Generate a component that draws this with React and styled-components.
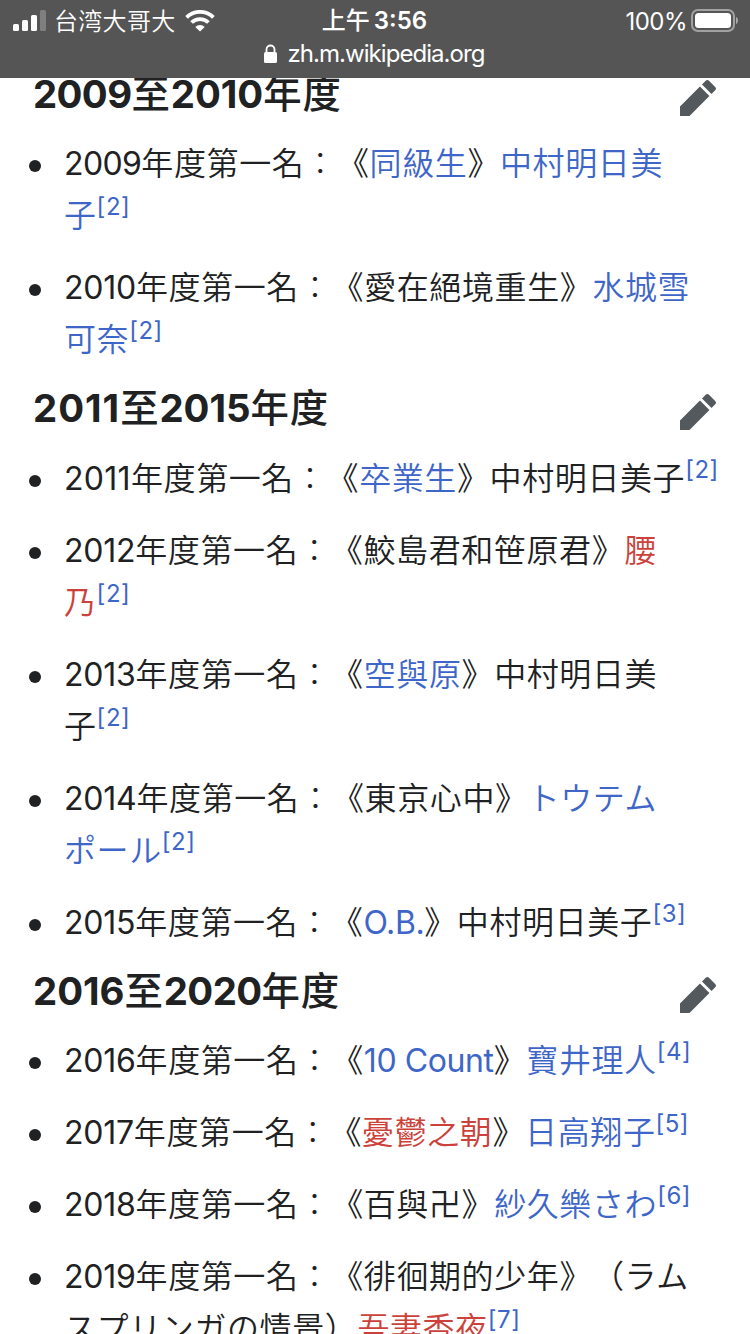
import React from 'react';
import styled, { createGlobalStyle } from 'styled-components';

const GlobalStyle = createGlobalStyle`
  body {
    margin: 0;
    background: #fff;
    color: #202122;
    font-family: Inter, 'Noto Sans CJK TC', sans-serif;
    text-spacing-trim: space-all;
  }
`;

const Screen = styled.div`
  width: 750px;
  height: 1334px;
  overflow: hidden;
`;

const TopBar = styled.header`
  position: relative;
  z-index: 1;
  box-sizing: border-box;
  height: 78px;
  padding: 5px 11px 0 13px;
  background: #555;
  color: #fff;
  font-size: 24px;
`;

const StatusRow = styled.div`
  display: grid;
  grid-template-columns: 1fr auto 1fr;
  align-items: center;
  height: 32px;
`;

const StatusGroup = styled.div`
  display: flex;
  align-items: center;
  justify-content: ${({ $end }) => ($end ? 'flex-end' : 'flex-start')};
  white-space: nowrap;
`;

const Carrier = styled.span`
  margin: -3px 9px 0 8px;
  font-family: 'Noto Sans CJK SC', sans-serif;
  font-weight: 350;
  letter-spacing: 0.3px;
  line-height: 32px;
`;

const Clock = styled.span`
  padding-right: 3px;
  font-weight: 600;
  line-height: 32px;
`;

const ClockPrefix = styled.span`
  font-weight: 500;
  margin-right: -2px;
`;

const Percent = styled.span`
  margin: 0 4px 0 0;
  letter-spacing: -0.5px;
`;

const AddressRow = styled.div`
  display: flex;
  align-items: center;
  justify-content: center;
  gap: 11px;
  height: 34px;
  padding-right: 4px;
`;

const Address = styled.span`
  letter-spacing: -0.95px;
  margin: -2px 0 0;
`;

const Article = styled.main`
  margin-top: -27px;
`;

const SectionHead = styled.div`
  display: flex;
  justify-content: space-between;
  align-items: center;
  height: 48px;
  padding: 19px 32px 20px 33px;
`;

const Section = styled.section`
  margin-bottom: -1px;

  &:nth-child(2) ${SectionHead} {
    padding-bottom: 21px;
  }
`;

const SectionTitle = styled.h3`
  margin: 0;
  font-size: 38.4px;
  font-weight: 500;
  line-height: 48px;
  letter-spacing: 0.8px;
  white-space: nowrap;
`;

const TitleYear = styled.span`
  font-weight: 700;
  letter-spacing: ${({ $tracking }) => $tracking}px;
`;

const EditIcon = styled.svg`
  width: 40px;
  height: 40px;
  margin-top: 8px;
  fill: #54595d;
`;

const List = styled.ul`
  margin: 0;
  padding: 0 0 0 29px;
  list-style: none;
`;

const Item = styled.li`
  display: flex;
  gap: 23px;
  margin-bottom: 20px;

  &:last-child {
    margin-bottom: 0;
  }

  &::before {
    content: '';
    flex: none;
    width: 12px;
    height: 12px;
    margin-top: 22px;
    border-radius: 50%;
    background: #202122;
  }
`;

const Text = styled.div`
  font-size: 32px;
  font-weight: 350;
  line-height: 52px;
  letter-spacing: 0.6px;
  white-space: nowrap;
`;

const Year = styled.span`
  font-weight: 400;
  letter-spacing: ${({ $tracking }) => $tracking}px;
`;

const Colon = styled.span`
  font-weight: 300;
`;

const Link = styled.a`
  color: ${({ $missing }) => ($missing ? '#cc423b' : '#3e66c8')};
  font-weight: ${({ $latin }) => ($latin ? 400 : 'inherit')};
  letter-spacing: ${({ $latin }) => ($latin ? '-0.4px' : 'inherit')};
`;

const Ref = styled.sup`
  position: relative;
  top: -12px;
  color: #3e66c8;
  font-size: 24px;
  font-weight: 400;
  line-height: 1;
  letter-spacing: 0.5px;
  vertical-align: baseline;
`;

const sections = [
  {
    years: [2009, 2010],
    items: [
      { year: 2009, body: <>《<Link>同級生</Link>》<Link>中村明日美<br />子</Link></>, note: 2 },
      { year: 2010, body: <>《愛在絕境重生》<Link>水城雪<br />可奈</Link></>, note: 2 },
    ],
  },
  {
    years: [2011, 2015],
    items: [
      { year: 2011, body: <>《<Link>卒業生</Link>》中村明日美子</>, note: 2 },
      { year: 2012, body: <>《鮫島君和笹原君》<Link $missing>腰<br />乃</Link></>, note: 2 },
      { year: 2013, body: <>《<Link>空與原</Link>》中村明日美<br />子</>, note: 2 },
      { year: 2014, body: <>《東京心中》<Link>トウテム<br />ポール</Link></>, note: 2 },
      { year: 2015, body: <>《<Link $latin>O.B.</Link>》中村明日美子</>, note: 3 },
    ],
  },
  {
    years: [2016, 2020],
    items: [
      { year: 2016, body: <>《<Link $latin>10 Count</Link>》<Link>寶井理人</Link></>, note: 4 },
      { year: 2017, body: <>《<Link $missing>憂鬱之朝</Link>》<Link>日高翔子</Link></>, note: 5 },
      { year: 2018, body: <>《百與卍》<Link>紗久樂さわ</Link></>, note: 6 },
      { year: 2019, body: <>《徘徊期的少年》（ラム<br />スプリンガの情景）<Link $missing>吾妻香夜</Link></>, note: 7 },
    ],
  },
];

// years with narrow ones need looser tracking to keep the columns even
const countOnes = (year) => String(year).split('1').length - 1;
const titleTracking = (year) => [-0.6, 0, 1][countOnes(year)];
const yearTracking = (year) => [-0.6, -0.25, 0.3][countOnes(year)];

const Signal = () => (
  <svg width="33" height="22" viewBox="0 0 33 22" fill="#fff">
    <rect x="0" y="14" width="6" height="7" rx="1.5" />
    <rect x="9" y="10" width="6" height="11" rx="1.5" />
    <rect x="18" y="5" width="6" height="16" rx="1.5" />
    <rect x="27" y="0" width="6" height="21" rx="1.5" opacity="0.25" />
  </svg>
);

const Wifi = () => (
  <svg width="30" height="22" viewBox="0 0 30 22" fill="none" stroke="#fff" strokeWidth="3.8">
    <path d="M1.6 7.3a19.2 19.2 0 0 1 26.8 0" />
    <path d="M6.6 12.5a12 12 0 0 1 16.8 0" />
    <path d="M15 21.6l-4.7-4.7a6.8 6.8 0 0 1 9.4 0z" fill="#fff" stroke="none" />
  </svg>
);

const Battery = () => (
  <svg width="48" height="24" viewBox="0 0 48 24">
    <rect x="1" y="1" width="42" height="21" rx="6" fill="none" stroke="#fff" strokeOpacity="0.45" strokeWidth="2" />
    <rect x="4" y="4" width="36" height="15" rx="3.5" fill="#fff" />
    <path d="M45 8v7c2.6-.8 2.6-6.2 0-7z" fill="#fff" fillOpacity="0.5" />
  </svg>
);

const Lock = () => (
  <svg width="13" height="20" viewBox="0 0 13 20">
    <path d="M2.5 9V5.500a4 4 0 0 1 8 0V9" fill="none" stroke="#fff" strokeWidth="1.8" />
    <rect x="0" y="8" width="13" height="11" rx="1.6" fill="#fff" />
  </svg>
);

const App = () => {
  return (
    <Screen>
      <GlobalStyle />
      <TopBar>
        <StatusRow>
          <StatusGroup>
            <Signal />
            <Carrier>台湾大哥大</Carrier>
            <Wifi />
          </StatusGroup>
          <Clock><ClockPrefix>上午</ClockPrefix> 3:56</Clock>
          <StatusGroup $end>
            <Percent>100%</Percent>
            <Battery />
          </StatusGroup>
        </StatusRow>
        <AddressRow>
          <Lock />
          <Address>zh.m.wikipedia.org</Address>
        </AddressRow>
      </TopBar>
      <Article>
        {sections.map(({ years: [from, to], items }) => (
          <Section key={from}>
            <SectionHead>
              <SectionTitle>
                <TitleYear $tracking={titleTracking(from)}>{from}</TitleYear>至
                <TitleYear $tracking={titleTracking(to)}>{to}</TitleYear>年度
              </SectionTitle>
              <EditIcon viewBox="0 0 20 20">
                <path d="m16.77 8 1.94-2a1 1 0 0 0 0-1.410l-3.340-3.300a1 1 0 0 0-1.410 0L12 3.230zM1 14.250V19h4.750l9.960-9.960-4.750-4.750z" />
              </EditIcon>
            </SectionHead>
            <List>
              {items.map((item) => (
                <Item key={item.year}>
                  <Text>
                    <Year $tracking={yearTracking(item.year)}>{item.year}</Year>年度第一名<Colon>：</Colon>{item.body}
                    <Ref>[{item.note}]</Ref>
                  </Text>
                </Item>
              ))}
            </List>
          </Section>
        ))}
      </Article>
    </Screen>
  );
};

export default App;
